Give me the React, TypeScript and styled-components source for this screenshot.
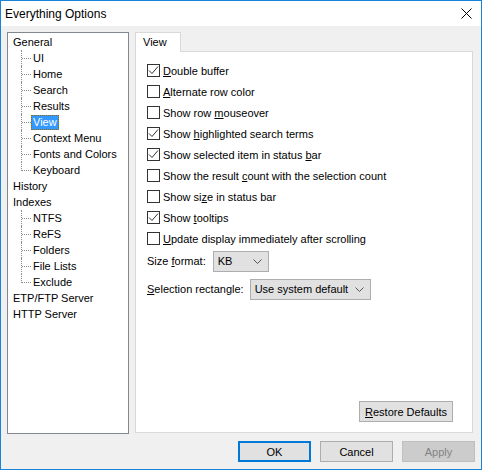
import React from 'react';
import styled, { createGlobalStyle } from 'styled-components';

const GlobalStyle = createGlobalStyle`
  html, body {
    margin: 0;
    padding: 0;
    background: #ffffff;
  }
  * {
    box-sizing: border-box;
  }
`;

const FONT = `"Liberation Sans", Arial, sans-serif`;

const Window = styled.div`
  width: 482px;
  height: 470px;
  border: 1px solid #1883d7;
  background: #f0f0f0;
  display: flex;
  flex-direction: column;
  font-family: ${FONT};
  font-size: 11px;
  color: #000;
`;

const TitleBar = styled.div`
  height: 25px;
  flex: none;
  background: #ffffff;
  display: flex;
  align-items: center;
  padding-left: 4px;
`;

const Title = styled.div`
  flex: 1;
  font-size: 12px;
  color: #000;
`;

const CloseButton = styled.div`
  width: 30px;
  height: 25px;
  display: flex;
  align-items: center;
  justify-content: center;
`;

const Body = styled.div`
  flex: 1;
  display: flex;
  gap: 6px;
  padding: 6px 8px 0 6px;
  min-height: 0;
`;

const Tree = styled.div`
  width: 122px;
  height: 402px;
  flex: none;
  background: #ffffff;
  border: 1px solid #828790;
  padding-top: 1px;
`;

const TreeRow = styled.div<{ $child?: boolean }>`
  height: 16px;
  display: flex;
  align-items: center;
  padding-left: ${({ $child }) => ($child ? '13px' : '3px')};
`;

const Connector = styled.span<{ $last?: boolean }>`
  position: relative;
  width: 10px;
  height: 16px;
  flex: none;

  &::before {
    content: '';
    position: absolute;
    left: 0;
    top: 0;
    height: ${({ $last }) => ($last ? '9px' : '16px')};
    border-left: 1px dotted #8c8c8c;
  }

  &::after {
    content: '';
    position: absolute;
    left: 1px;
    top: 8px;
    width: 9px;
    border-top: 1px dotted #8c8c8c;
  }
`;

const TreeLabel = styled.span<{ $selected?: boolean }>`
  height: 15px;
  line-height: 14px;
  padding: 0 2px;
  white-space: nowrap;
  background: ${({ $selected }) => ($selected ? '#3399ff' : 'transparent')};
  color: ${({ $selected }) => ($selected ? '#ffffff' : '#000000')};
  outline: ${({ $selected }) => ($selected ? '1px dotted #996600' : 'none')};
  outline-offset: -1px;
`;

const TabArea = styled.div`
  flex: 1;
  display: flex;
  flex-direction: column;
  padding-bottom: 1px;
`;

const TabStrip = styled.div`
  display: flex;
  height: 20px;
  margin-bottom: -1px;
`;

const Tab = styled.div`
  position: relative;
  z-index: 1;
  width: 46px;
  height: 20px;
  background: #ffffff;
  border: 1px solid #d9d9d9;
  border-bottom: none;
  padding-left: 7px;
  line-height: 18px;
`;

const Panel = styled.div`
  flex: 1;
  background: #ffffff;
  border: 1px solid #d9d9d9;
  display: flex;
  flex-direction: column;
  padding: 8px 19px 10px 11px;
`;

const CheckRow = styled.div`
  height: 21px;
  display: flex;
  align-items: center;
  gap: 3px;
  white-space: nowrap;
`;

const Box = styled.span`
  width: 13px;
  height: 13px;
  flex: none;
  border: 1px solid #333333;
  background: #ffffff;
  display: flex;
  align-items: center;
  justify-content: center;
`;

const FieldRow = styled.div<{ $gap: number; $top: number }>`
  display: flex;
  align-items: center;
  gap: ${({ $gap }) => $gap}px;
  height: 22px;
  margin-top: ${({ $top }) => $top}px;
  white-space: nowrap;
`;

const Select = styled.div<{ $width: number }>`
  width: ${({ $width }) => $width}px;
  height: 21px;
  background: #e1e1e1;
  border: 1px solid #adadad;
  display: flex;
  align-items: center;
  justify-content: space-between;
  padding: 0 6px 0 4px;
`;

const Spacer = styled.div`
  flex: 1;
`;

const Button = styled.div<{ $width: number; $default?: boolean; $disabled?: boolean }>`
  width: ${({ $width }) => $width}px;
  height: 21px;
  display: flex;
  align-items: center;
  justify-content: center;
  background: ${({ $disabled }) => ($disabled ? '#cccccc' : '#e1e1e1')};
  border: ${({ $default, $disabled }) =>
    $default ? '2px solid #0078d7' : $disabled ? '1px solid #bfbfbf' : '1px solid #adadad'};
  color: ${({ $disabled }) => ($disabled ? '#838383' : '#000000')};
`;

const RestoreWrap = styled.div`
  display: flex;
  justify-content: flex-end;
`;

const Footer = styled.div`
  height: 35px;
  flex: none;
  display: flex;
  justify-content: flex-end;
  gap: 9px;
  padding: 7px 6px 0 0;
`;

type Node = { label: string; children?: string[] };

const tree: Node[] = [
  {
    label: 'General',
    children: ['UI', 'Home', 'Search', 'Results', 'View', 'Context Menu', 'Fonts and Colors', 'Keyboard'],
  },
  { label: 'History' },
  { label: 'Indexes', children: ['NTFS', 'ReFS', 'Folders', 'File Lists', 'Exclude'] },
  { label: 'ETP/FTP Server' },
  { label: 'HTTP Server' },
];

const options: { text: React.ReactNode; checked: boolean }[] = [
  { text: <><u>D</u>ouble buffer</>, checked: true },
  { text: <><u>A</u>lternate row color</>, checked: false },
  { text: <>Show row <u>m</u>ouseover</>, checked: false },
  { text: <>Show <u>h</u>ighlighted search terms</>, checked: true },
  { text: <>Show selected item in status <u>b</u>ar</>, checked: true },
  { text: <>Show the result <u>c</u>ount with the selection count</>, checked: false },
  { text: <>Show si<u>z</u>e in status bar</>, checked: false },
  { text: <>Show <u>t</u>ooltips</>, checked: true },
  { text: <><u>U</u>pdate display immediately after scrolling</>, checked: false },
];

const Check = () => (
  <svg width="11" height="11" viewBox="0 0 11 11">
    <path d="M1 5.5 L4 8.5 L10 1.5" fill="none" stroke="#333333" strokeWidth="1" />
  </svg>
);

const Chevron = () => (
  <svg width="9" height="5" viewBox="0 0 9 5">
    <path d="M0.5 0.5 L4.5 4.5 L8.5 0.5" fill="none" stroke="#555555" strokeWidth="1" />
  </svg>
);

const CloseIcon = () => (
  <svg width="11" height="11" viewBox="0 0 11 11">
    <path d="M0.5 0.5 L10.5 10.5 M10.5 0.5 L0.5 10.5" stroke="#000000" strokeWidth="1" />
  </svg>
);

const App: React.FC = () => {
  return (
    <>
      <GlobalStyle />
      <Window>
        <TitleBar>
          <Title>Everything Options</Title>
          <CloseButton>
            <CloseIcon />
          </CloseButton>
        </TitleBar>

        <Body>
          <Tree>
            {tree.map((node) => (
              <React.Fragment key={node.label}>
                <TreeRow>
                  <TreeLabel>{node.label}</TreeLabel>
                </TreeRow>
                {node.children?.map((child, i) => (
                  <TreeRow $child key={child}>
                    <Connector $last={i === node.children!.length - 1} />
                    <TreeLabel $selected={child === 'View'}>{child}</TreeLabel>
                  </TreeRow>
                ))}
              </React.Fragment>
            ))}
          </Tree>

          <TabArea>
            <TabStrip>
              <Tab>View</Tab>
            </TabStrip>
            <Panel>
              {options.map((opt, i) => (
                <CheckRow key={i}>
                  <Box>{opt.checked && <Check />}</Box>
                  <span>{opt.text}</span>
                </CheckRow>
              ))}
              <FieldRow $gap={7} $top={1}>
                <span>Size <u>f</u>ormat:</span>
                <Select $width={56}>
                  <span>KB</span>
                  <Chevron />
                </Select>
              </FieldRow>
              <FieldRow $gap={6} $top={6}>
                <span><u>S</u>election rectangle:</span>
                <Select $width={121}>
                  <span>Use system default</span>
                  <Chevron />
                </Select>
              </FieldRow>
              <Spacer />
              <RestoreWrap>
                <Button $width={94}><span><u>R</u>estore Defaults</span></Button>
              </RestoreWrap>
            </Panel>
          </TabArea>
        </Body>

        <Footer>
          <Button $width={73} $default>OK</Button>
          <Button $width={73}>Cancel</Button>
          <Button $width={73} $disabled>Apply</Button>
        </Footer>
      </Window>
    </>
  );
};

export default App;
